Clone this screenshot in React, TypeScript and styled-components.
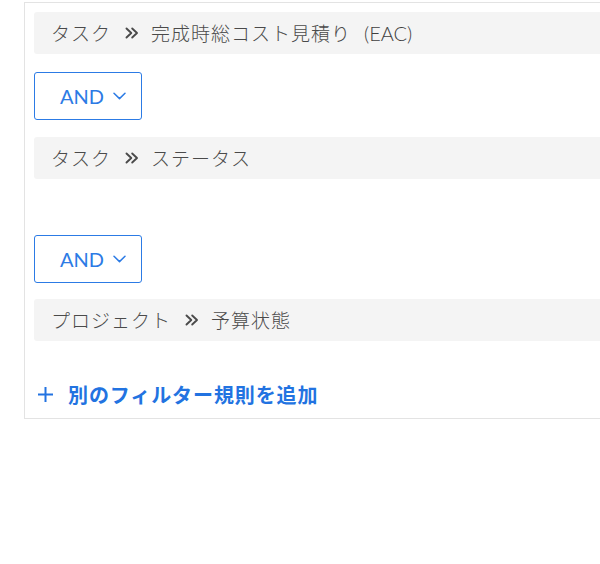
import React from "react";
import styled, { createGlobalStyle } from "styled-components";

const Global = createGlobalStyle`
  html, body { margin: 0; padding: 0; background: #fff; }
  body { font-family: Lato, "Noto Sans CJK JP", sans-serif; overflow: hidden; }
`;

const Page = styled.div`
  width: 600px;
  height: 564px;
  padding: 2px 0 0 24px;
  box-sizing: border-box;
  overflow: hidden;
`;

const Panel = styled.div`
  width: 640px;
  border: 1px solid #e3e3e3;
  box-sizing: border-box;
  padding: 9px 0 12px 9px;
  display: flex;
  flex-direction: column;
  align-items: flex-start;
`;

const Rule = styled.div<{ $after?: number }>`
  align-self: stretch;
  height: 42px;
  background: #f4f4f4;
  border-radius: 3px;
  display: flex;
  align-items: center;
  padding-left: 17px;
  padding-bottom: 1px;
  box-sizing: border-box;
  margin-bottom: ${(p) => p.$after ?? 0}px;
  font-size: 19px;
  font-weight: 300;
  letter-spacing: 1px;
  color: #4a4a4a;
  font-family: "Noto Sans CJK JP", sans-serif;
  white-space: nowrap;
`;

const Latin = styled.span`
  font-family: Lato, "Noto Sans CJK JP", sans-serif;
  font-weight: 300;
  letter-spacing: 0;
  margin-left: 13px;
  font-size: 20px;
  color: #3f3f3f;
`;

const Sep = styled.svg`
  width: 14px;
  height: 14px;
  margin: 0 12px 0 14px;
  flex: none;
`;

const AndButton = styled.button<{ $after: number }>`
  width: 108px;
  height: 48px;
  border: 1px solid #2c7be5;
  border-radius: 3px;
  background: #fff;
  color: #2c7be5;
  font-family: Lato, sans-serif;
  font-size: 20px;
  display: flex;
  align-items: center;
  padding: 0 0 1px 25px;
  gap: 9px;
  margin-bottom: ${(p) => p.$after}px;
  box-sizing: border-box;
`;

const Spacer = styled.div<{ $h: number }>`
  height: ${(p) => p.$h}px;
  flex: none;
`;

const AddLink = styled.div`
  display: flex;
  align-items: center;
  height: 24px;
  color: #2273e1;
  font-family: "Noto Sans CJK JP", sans-serif;
  font-weight: 700;
  font-size: 20px;
  letter-spacing: 0.9px;
  margin-left: 4px;
  gap: 15px;
`;

const Separator = () => (
  <Sep viewBox="0 0 14 14" fill="none" stroke="#4a4a4a" strokeWidth="1.9" strokeLinecap="round" strokeLinejoin="round">
    <path d="M1.5 2.5 L6.3 7 L1.5 11.5" />
    <path d="M7.2 2.5 L12 7 L7.2 11.5" />
  </Sep>
);

const Chevron = () => (
  <svg width="13" height="8" viewBox="0 0 13 8" fill="none" stroke="#2c7be5" strokeWidth="1.5" strokeLinecap="round" strokeLinejoin="round">
    <path d="M1 1.2 L6.5 6.6 L12 1.2" />
  </svg>
);

const Plus = () => (
  <svg width="15" height="15" viewBox="0 0 15 15" fill="none" stroke="#2273e1" strokeWidth="2">
    <path d="M7.5 0 V15 M0 7.5 H15" />
  </svg>
);

export default function App() {
  return (
    <>
      <Global />
      <Page>
        <Panel>
          <Rule $after={18}>
            タスク<Separator />完成時総コスト見積り<Latin>(EAC)</Latin>
          </Rule>
          <AndButton $after={17}>
            AND <Chevron />
          </AndButton>
          <Rule>
            タスク<Separator />ステータス
          </Rule>
          <Spacer $h={56} />
          <AndButton $after={16}>
            AND <Chevron />
          </AndButton>
          <Rule>
            プロジェクト<Separator />予算状態
          </Rule>
          <Spacer $h={41} />
          <AddLink>
            <Plus />
            別のフィルター規則を追加
          </AddLink>
        </Panel>
      </Page>
    </>
  );
}
